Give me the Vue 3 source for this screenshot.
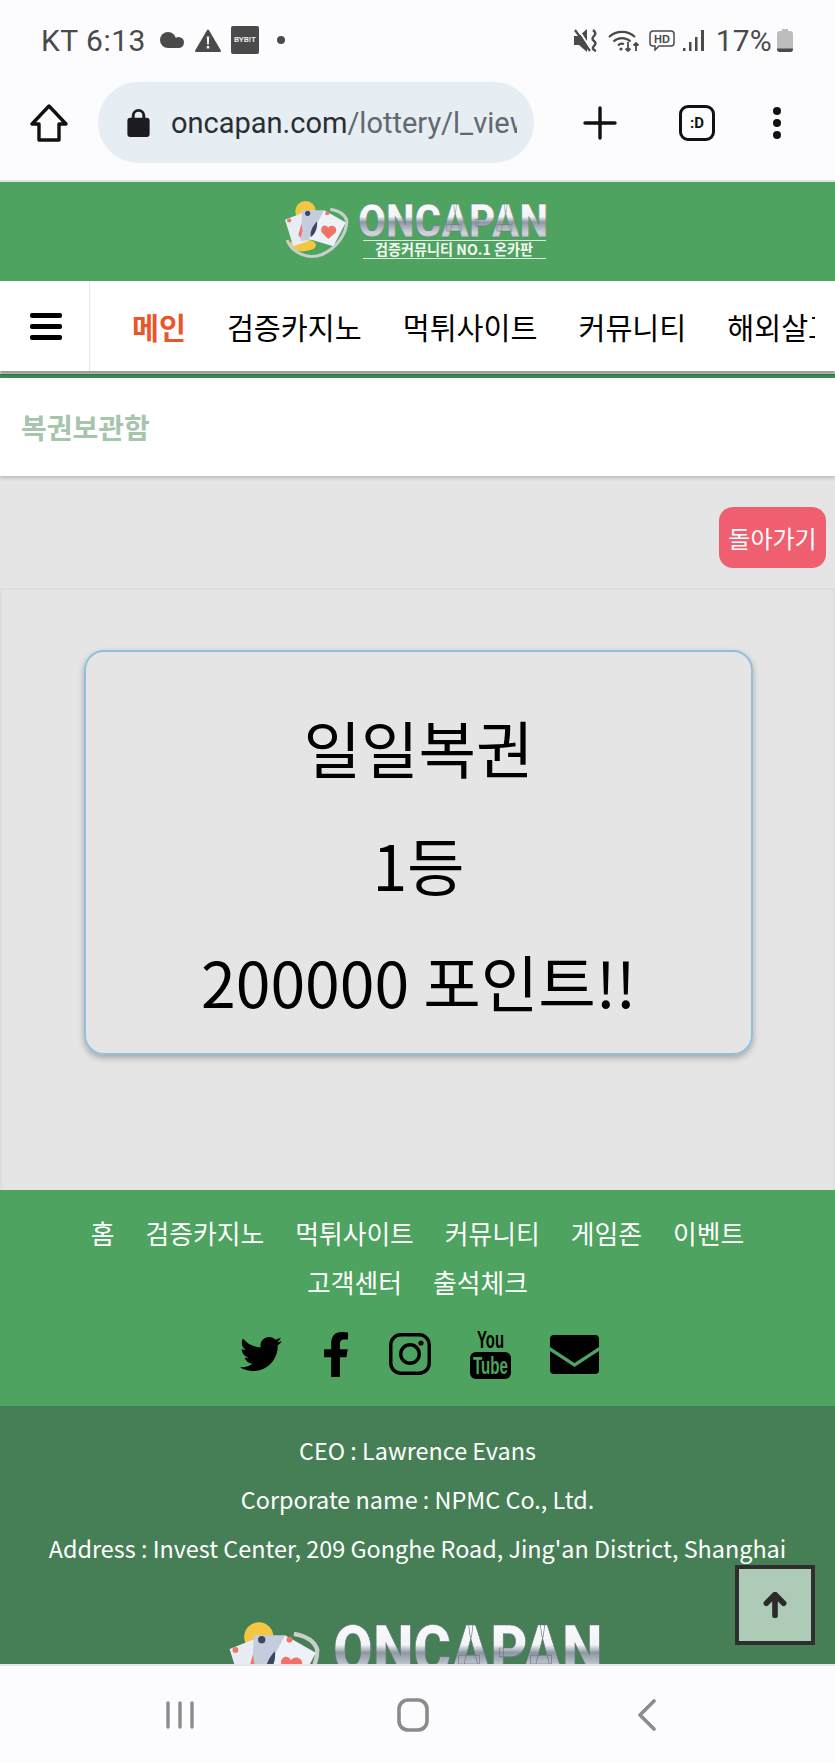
<template>
	<div class="phone">
		<div class="status">
			<div class="status__left">
				<span class="status__text">KT 6:13</span>
				<svg class="ic-cloud" viewBox="0 0 24 16"><g fill="#4a4a4a"><circle cx="8" cy="8" r="8" /><circle cx="18.500" cy="10.500" r="5.500" /><rect x="8" y="11" width="10" height="5" /></g></svg>
				<svg class="ic-warn" viewBox="0 0 26 23"><path fill="#4a4a4a" stroke="#4a4a4a" stroke-width="2" stroke-linejoin="round" d="M13 1.500L25 22H1z" /><path fill="#fcfcfe" d="M11.800 7.500h2.400l-.4 8h-1.600zM11.800 17h2.400v2.400h-2.400z" /></svg>
				<span class="bybit">BYB!T</span>
				<span class="status__dot"></span>
			</div>
			<div class="status__right">
				<svg class="ic-mute" viewBox="0 0 24 23">
					<path fill="#4a4a4a" d="M0 7h5l8-7v23l-8-7H0z" />
					<path fill="none" stroke="#fcfcfe" stroke-width="2" d="M4 0l13 20" />
					<path fill="none" stroke="#4a4a4a" stroke-width="2.200" d="M1 1l15 21" />
					<path fill="none" stroke="#4a4a4a" stroke-width="2.400" d="M19 1q4 3 1 6t0 5 0 5 2 5" />
				</svg>
				<svg class="ic-wifi" viewBox="0 0 32 23">
					<g fill="none" stroke="#4a4a4a" stroke-width="2.200">
						<path d="M1 8a19 19 0 0 1 26 0M5.500 12.500a12.500 12.500 0 0 1 17 0M10 16.500a6 6 0 0 1 6-1.500" />
						<path stroke-width="1.800" d="M20 13v9M17.500 19.500l2.500 2.500 2.500-2.500M28 22v-8M25.500 16.500l2.500-2.500 2.500 2.500" />
					</g>
					<circle cx="13" cy="20" r="1.600" fill="#4a4a4a" />
				</svg>
				<svg class="ic-hd" viewBox="0 0 26 21"><path fill="none" stroke="#4a4a4a" stroke-width="1.500" d="M4 1h18a3 3 0 0 1 3 3v9a3 3 0 0 1-3 3H10l-4 4v-4H4a3 3 0 0 1-3-3V4a3 3 0 0 1 3-3z" /><text x="13" y="13" text-anchor="middle" class="ic-hd__text">HD</text></svg>
				<svg class="ic-signal" viewBox="0 0 21 21"><path fill="#4a4a4a" d="M0 18h2.500v3H0zM6 12h2.500v9H6zM12 7h2.500v14H12zM18 0h3v21h-3z" /></svg>
				<span class="status__text status__text--pct">17%</span>
				<svg class="ic-batt" viewBox="0 0 16 23"><path fill="#bdbdbd" d="M5 0h6v2h2a3 3 0 0 1 3 3v15a3 3 0 0 1-3 3H3a3 3 0 0 1-3-3V5a3 3 0 0 1 3-3h2z" /><path fill="#4a4a4a" d="M0 19.500h16V20a3 3 0 0 1-3 3H3a3 3 0 0 1-3-3z" /></svg>
			</div>
		</div>

		<div class="toolbar">
			<svg class="ic-home" viewBox="0 0 38 38"><path fill="none" stroke="#111" stroke-width="3.400" stroke-linejoin="round" d="M19 2L2 20h7v16h20V20h7z" /></svg>
			<div class="url">
				<svg class="ic-lock" viewBox="0 0 23 30"><path fill="none" stroke="#1c1c20" stroke-width="3" d="M6 12V8a5.500 5.500 0 0 1 11 0v4" /><rect y="10" width="23" height="20" rx="3" fill="#1c1c20" /></svg>
				<div class="url__text"><span class="url__host">oncapan.com</span>/lottery/l_view</div>
			</div>
			<svg class="ic-plus" viewBox="0 0 34 34"><path fill="none" stroke="#111" stroke-width="3.400" stroke-linecap="round" d="M17 2v30M2 17h30" /></svg>
			<div class="tabs">:D</div>
			<div class="dots"><i></i><i></i><i></i></div>
		</div>

		<div class="page">
			<header class="head">
				<svg class="logo" viewBox="0 0 263 57">
					<defs>
						<linearGradient id="chrome" x1="0" y1="0" x2="0" y2="1">
							<stop offset="0" stop-color="#ffffff" />
							<stop offset="0.44" stop-color="#f1f3f5" />
							<stop offset="0.54" stop-color="#8d97a3" />
							<stop offset="0.74" stop-color="#cfd5da" />
							<stop offset="1" stop-color="#87909b" />
						</linearGradient>
					</defs>
					<g id="logo-art">
						<g transform="translate(-1 0) scale(1.03)">
							<circle cx="20" cy="8" r="10" fill="#f3c742" />
							<ellipse cx="17" cy="41" rx="13" ry="6" fill="#f3c742" />
							<path fill="none" stroke="#c9cfcb" stroke-width="3" d="M2 36C8 50 24 55 36 50 50 44 60 30 60 17 58 10 50 7 44 6" />
							<path fill="#e8ecf4" d="M0 16.300L16.700 9.700 23 37 8 42z" />
							<path fill="#c5cddd" d="M16.700 7H38L35 35 15 37z" />
							<path fill="#eef1f8" d="M38 7L59 19 47 42 23 35z" />
							<circle cx="4" cy="17" r="2" fill="#ee7468" />
							<circle cx="22" cy="10" r="2.500" fill="#3c4660" />
							<circle cx="41" cy="10" r="2" fill="#ee7468" />
							<path fill="#ee7468" d="M42 35l-6-6c-3-6 3-10 6-5 3-4 10-1 7 5z" />
							<path fill="#3c4660" d="M31 18c1 6-2 13-6 15-1-5 2-11 6-15z" />
							<path fill="#ee7468" d="M16 20l1 7-2 7-2-3z" />
						</g>
						<text x="72" y="33.500" class="logo__name" fill="url(#chrome)" textLength="190" lengthAdjust="spacingAndGlyphs">ONCAPAN</text>
						<path stroke="#dfe9e1" d="M77 37.500h183M77 55.500h183" />
						<text x="89" y="52" class="logo__sub" textLength="158" lengthAdjust="spacingAndGlyphs">검증커뮤니티 NO.1 온카판</text>
					</g>
				</svg>
			</header>

			<nav class="nav">
				<div class="nav__burger"><i></i><i></i><i></i></div>
				<div class="nav__list">
					<a class="nav__item nav__item--on">메인</a>
					<a v-for="item in navItems" :key="item" class="nav__item">{{ item }}</a>
				</div>
			</nav>

			<div class="title">복권보관함</div>

			<div class="back-row"><button class="back">돌아가기</button></div>

			<section class="board">
				<div class="ticket">
					<p>일일복권</p>
					<p>1등</p>
					<p>200000 포인트!!</p>
				</div>
			</section>

			<footer>
				<div class="foot-top">
					<div class="foot-links">
						<a v-for="link in footLinks" :key="link">{{ link }}</a>
					</div>
					<div class="socials">
						<svg class="so-tw" viewBox="0 0 512 512"><path d="M459.370 151.716c.325 4.548.325 9.097.325 13.645 0 138.720-105.583 298.558-298.558 298.558-59.452 0-114.680-17.219-161.137-47.106 8.447.974 16.568 1.299 25.340 1.299 49.055 0 94.213-16.568 130.274-44.832-46.132-.975-84.792-31.188-98.112-72.772 6.498.974 12.995 1.624 19.818 1.624 9.421 0 18.843-1.300 27.614-3.573-48.081-9.747-84.143-51.980-84.143-102.985v-1.299c13.969 7.797 30.214 12.670 47.431 13.319-28.264-18.843-46.781-51.005-46.781-87.391 0-19.492 5.197-37.360 14.294-52.954 51.655 63.675 129.300 105.258 216.365 109.807-1.624-7.797-2.599-15.918-2.599-24.040 0-57.828 46.782-104.934 104.934-104.934 30.213 0 57.502 12.670 76.670 33.137 23.715-4.548 46.456-13.320 66.599-25.340-7.798 24.366-24.366 44.833-46.132 57.827 21.117-2.273 41.584-8.122 60.426-16.243-14.292 20.791-32.161 39.308-52.628 54.253z" /></svg>
						<svg class="so-fb" viewBox="22 0 275 512" preserveAspectRatio="none"><path d="M279.140 288l14.220-92.660h-88.910v-60.130c0-25.350 12.420-50.060 52.240-50.060h40.420V6.260S260.430 0 225.360 0c-73.220 0-121.080 44.380-121.080 124.720v70.620H22.890V288h81.390v224h100.170V288z" /></svg>
						<svg class="so-ig" viewBox="0 0 42 42"><rect x="1.800" y="1.800" width="38.400" height="38.400" rx="10" fill="none" stroke="#000" stroke-width="3.400" /><circle cx="21" cy="21" r="9.300" fill="none" stroke="#000" stroke-width="3.400" /><circle cx="32" cy="10" r="2.600" /></svg>
						<svg class="so-yt" viewBox="0 0 41 49">
							<text x="7" y="18" class="so-yt__you" textLength="27" lengthAdjust="spacingAndGlyphs">You</text>
							<rect y="22" width="41" height="27" rx="6" />
							<text x="3" y="44" class="so-yt__tube" textLength="35" lengthAdjust="spacingAndGlyphs">Tube</text>
						</svg>
						<svg class="so-mail" viewBox="0 0 49 39"><path d="M4 0h41a4 4 0 0 1 4 4v8L24.500 28 0 12V4a4 4 0 0 1 4-4zM0 16l24.500 16L49 16v19a4 4 0 0 1-4 4H4a4 4 0 0 1-4-4z" /></svg>
					</div>
				</div>
				<div class="foot-info">
					<p>CEO : Lawrence Evans</p>
					<p>Corporate name : NPMC Co., Ltd.</p>
					<p>Address : Invest Center, 209 Gonghe Road, Jing'an District, Shanghai</p>
					<svg class="logo logo--foot" viewBox="0 0 263 57"><use href="#logo-art" /></svg>
				</div>
			</footer>

			<button class="to-top">
				<svg viewBox="0 0 28 30"><path fill="none" stroke="#2b2b2b" stroke-width="6.500" stroke-linecap="round" stroke-linejoin="round" d="M14 27V4M4 13l10-10 10 10" /></svg>
			</button>
		</div>

		<div class="sysnav">
			<svg class="sys-recent" viewBox="0 0 30 28"><path stroke="#8b8b8b" stroke-width="3.400" stroke-linecap="round" d="M3 2v24M15 2v24M27 2v24" /></svg>
			<svg class="sys-home" viewBox="0 0 32 34"><rect x="2" y="2" width="28" height="30" rx="9" fill="none" stroke="#8b8b8b" stroke-width="3.600" /></svg>
			<svg class="sys-back" viewBox="0 0 20 32"><path fill="none" stroke="#8b8b8b" stroke-width="3.600" stroke-linecap="round" stroke-linejoin="round" d="M17 2L3 16l14 14" /></svg>
		</div>
	</div>
</template>

<script setup>
	const navItems = ["검증카지노", "먹튀사이트", "커뮤니티", "해외살고"];
	const footLinks = ["홈", "검증카지노", "먹튀사이트", "커뮤니티", "게임존", "이벤트", "고객센터", "출석체크"];
</script>

<style>
	html,
	body {
		margin: 0;
		background: #fcfcfe;
	}
</style>

<style scoped>
	.phone {
		width: 835px;
		height: 1763px;
		display: flex;
		flex-direction: column;
		overflow: hidden;
		background: #fcfcfe;
		font-family: "Noto Sans CJK KR", "Noto Sans", sans-serif;
	}

	.status {
		height: 63px;
		padding: 17px 42px 0 41px;
		box-sizing: border-box;
		display: flex;
		justify-content: space-between;
		align-items: center;
		flex-shrink: 0;
	}

	.status__left,
	.status__right {
		display: flex;
		align-items: center;
	}

	.status__text {
		font-family: Roboto, sans-serif;
		font-size: 30px;
		color: #4a4a4a;
		letter-spacing: 0.5px;
	}

	.status__text--pct {
		margin-left: 12px;
		letter-spacing: 0.2px;
	}

	.ic-cloud {
		width: 24px;
		height: 16px;
		margin-left: 14px;
	}

	.ic-warn {
		width: 26px;
		height: 23px;
		margin-left: 11px;
	}

	.bybit {
		width: 28px;
		height: 28px;
		margin-left: 10px;
		border-radius: 2px;
		background: #4a4a4a;
		color: #e8e8e8;
		font-family: Roboto, sans-serif;
		font-size: 8px;
		font-weight: 700;
		line-height: 28px;
		text-align: center;
	}

	.status__dot {
		width: 8px;
		height: 8px;
		margin-left: 18px;
		border-radius: 50%;
		background: #4a4a4a;
	}

	.ic-mute {
		width: 24px;
		height: 23px;
	}

	.ic-wifi {
		width: 32px;
		height: 23px;
		margin-left: 10px;
	}

	.ic-hd {
		width: 26px;
		height: 21px;
		margin-left: 9px;
	}

	.ic-hd__text {
		font-family: "Liberation Sans", sans-serif;
		font-size: 11px;
		font-weight: 700;
		fill: #4a4a4a;
	}

	.ic-signal {
		width: 21px;
		height: 21px;
		margin-left: 8px;
	}

	.ic-batt {
		width: 16px;
		height: 23px;
		margin-left: 5px;
	}

	.toolbar {
		height: 119px;
		box-sizing: border-box;
		padding: 0 49px 0 30px;
		display: flex;
		align-items: center;
		border-bottom: 2px solid #dfe3e6;
		flex-shrink: 0;
	}

	.ic-home {
		width: 38px;
		height: 38px;
		margin-top: 2px;
	}

	.url {
		width: 436px;
		height: 81px;
		margin: 2px 0 0 30px;
		padding-left: 29px;
		box-sizing: border-box;
		display: flex;
		align-items: center;
		border-radius: 41px;
		background: #e6edf3;
	}

	.ic-lock {
		width: 23px;
		height: 29px;
		flex-shrink: 0;
	}

	.url__text {
		width: 346px;
		margin-left: 21px;
		overflow: hidden;
		white-space: nowrap;
		font-family: Roboto, sans-serif;
		font-size: 29px;
		color: #62686e;
	}

	.url__host {
		color: #2a2d31;
	}

	.ic-plus {
		width: 34px;
		height: 34px;
		margin: 2px 0 0 49px;
	}

	.tabs {
		width: 36px;
		height: 36px;
		margin: 2px 0 0 62px;
		box-sizing: border-box;
		border: 3px solid #111;
		border-radius: 9px;
		font-family: Roboto, sans-serif;
		font-size: 15px;
		font-weight: 700;
		line-height: 30px;
		text-align: center;
		color: #111;
	}

	.dots {
		margin: 2px 0 0 58px;
		display: flex;
		flex-direction: column;
		gap: 4px;
	}

	.dots i {
		width: 8px;
		height: 8px;
		border-radius: 50%;
		background: #111;
	}

	.page {
		position: relative;
		flex: 1;
		overflow: hidden;
		background: #e5e5e5;
	}

	.head {
		height: 99px;
		padding-top: 21px;
		box-sizing: border-box;
		background: #4ea360;
		text-align: center;
	}

	.logo {
		width: 263px;
		height: 57px;
		overflow: visible;
	}

	.logo__name {
		font-family: Roboto, sans-serif;
		font-size: 47px;
		font-weight: 900;
		stroke: #6a7480;
		stroke-width: 0.5px;
	}

	.logo__sub {
		font-family: "Noto Sans CJK KR", sans-serif;
		font-size: 15px;
		font-weight: 700;
		fill: #f2f7f3;
	}

	.nav {
		height: 90px;
		display: flex;
		background: #fff;
		box-shadow: 0 3px 3px rgba(0, 0, 0, 0.35);
		position: relative;
		margin-bottom: 3px;
	}

	.nav__burger {
		width: 90px;
		box-sizing: border-box;
		padding-left: 30px;
		display: flex;
		flex-direction: column;
		justify-content: center;
		gap: 6px;
		border-right: 1px solid #e6e6e6;
	}

	.nav__burger i {
		width: 32px;
		height: 5px;
		border-radius: 2px;
		background: #000;
	}

	.nav__list {
		width: 725px;
		display: flex;
		align-items: center;
		padding-left: 42px;
		box-sizing: border-box;
		overflow: hidden;
		white-space: nowrap;
	}

	.nav__item {
		font-size: 29.300px;
		color: #000;
		margin-right: 41px;
	}

	.nav__item--on {
		font-weight: 700;
		color: #e8562a;
	}

	.title {
		height: 102px;
		box-sizing: border-box;
		padding: 0 21px;
		display: flex;
		align-items: center;
		border-top: 4px solid #3f8a52;
		background: #fff;
		box-shadow: 0 2px 4px rgba(0, 0, 0, 0.2);
		font-size: 28px;
		font-weight: 700;
		color: #a6c5ac;
	}

	.back-row {
		height: 114px;
		box-sizing: border-box;
		padding: 31px 9px 0 0;
		display: flex;
		justify-content: flex-end;
		align-items: flex-start;
		border-bottom: 2px solid #dedede;
	}

	.back {
		width: 107px;
		height: 61px;
		padding: 0;
		border: 0;
		border-radius: 14px;
		background: #ef5f70;
		color: #fff;
		font-family: inherit;
		font-size: 24px;
	}

	.board {
		height: 600px;
		box-sizing: border-box;
		padding: 60px 80px 0 82px;
		border: solid #dedede;
		border-width: 0 2px 0 2px;
	}

	.ticket {
		height: 405px;
		box-sizing: border-box;
		padding-top: 36px;
		border: 2px solid #93bfdf;
		border-radius: 20px;
		box-shadow: 0 3px 6px rgba(0, 0, 0, 0.28);
		text-align: center;
		font-size: 62.500px;
		color: #000;
	}

	.ticket p {
		margin: 0;
		height: 117px;
		line-height: 117px;
	}

	.foot-top {
		height: 216px;
		box-sizing: border-box;
		padding-top: 18px;
		background: #4ea360;
	}

	.foot-links {
		display: flex;
		flex-wrap: wrap;
		justify-content: center;
		gap: 0 31px;
		padding: 0 60px;
	}

	.foot-links a {
		height: 49px;
		line-height: 49px;
		font-size: 25.800px;
		color: #fff;
	}

	.socials {
		margin-top: 20px;
		padding-left: 4px;
		display: flex;
		justify-content: center;
		align-items: center;
		height: 56px;
	}

	.so-tw {
		width: 42px;
		height: 42px;
		fill: #000;
	}

	.so-fb {
		width: 24px;
		height: 45px;
		margin-left: 42px;
		fill: #000;
	}

	.so-ig {
		width: 42px;
		height: 42px;
		margin-left: 41px;
		fill: #000;
	}

	.so-yt {
		width: 41px;
		height: 49px;
		margin-left: 39px;
		fill: #000;
	}

	.so-yt__you {
		font-family: "Liberation Sans", sans-serif;
		font-size: 24px;
		font-weight: 700;
	}

	.so-yt__tube {
		font-family: "Liberation Sans", sans-serif;
		font-size: 24px;
		font-weight: 700;
		fill: #4ea360;
	}

	.so-mail {
		width: 49px;
		height: 39px;
		margin-left: 39px;
		fill: #000;
	}

	.foot-info {
		padding-top: 20px;
		background: #467f55;
		text-align: center;
		font-size: 23.400px;
		color: #fff;
	}

	.foot-info p {
		margin: 0;
		height: 49px;
		line-height: 49px;
	}

	.logo--foot {
		display: block;
		width: 373px;
		height: 81px;
		margin: 52px auto 0;
	}

	.to-top {
		position: absolute;
		left: 735px;
		top: 1383px;
		width: 80px;
		height: 80px;
		padding: 0;
		box-sizing: border-box;
		border: 4px solid #2e2e2e;
		background: #aecbb8;
	}

	.to-top svg {
		display: block;
		width: 26px;
		height: 26px;
		margin: auto;
	}

	.sysnav {
		height: 99px;
		flex-shrink: 0;
		display: flex;
		align-items: center;
		border-top: 2px solid #e4e7ec;
		box-sizing: border-box;
		padding: 0 178px 0 165px;
		justify-content: space-between;
	}

	.sys-recent {
		width: 30px;
		height: 28px;
	}

	.sys-home {
		width: 32px;
		height: 34px;
		margin-right: 6px;
	}

	.sys-back {
		width: 20px;
		height: 32px;
	}
</style>
